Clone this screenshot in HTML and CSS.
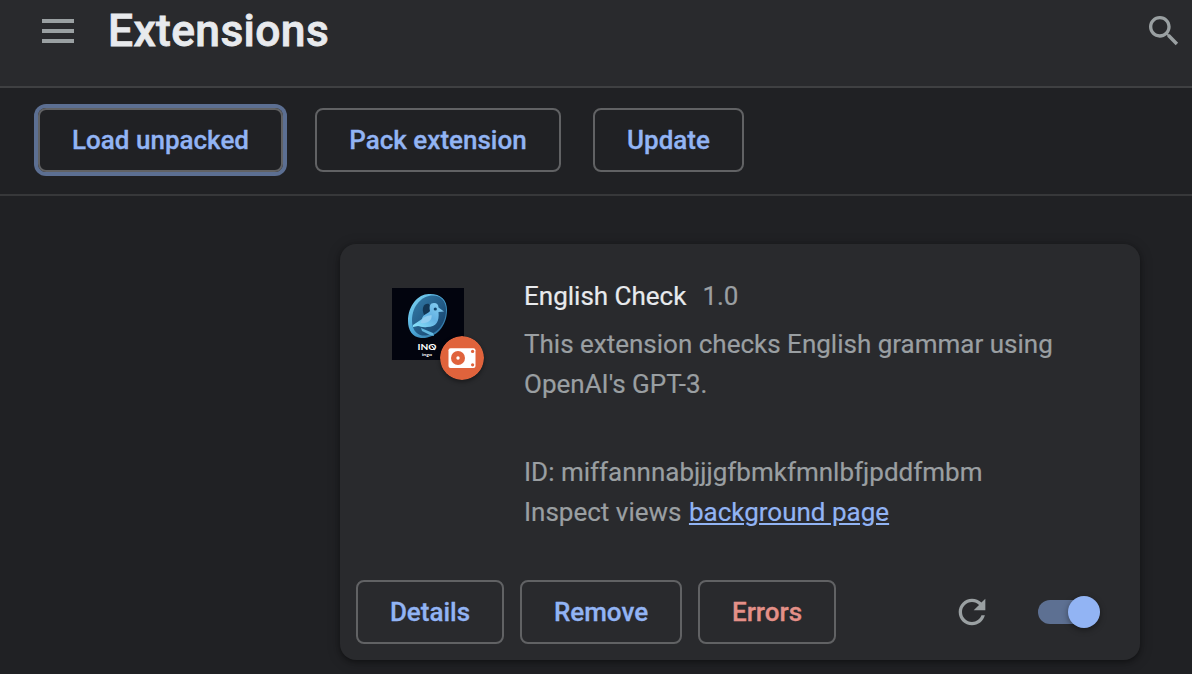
FILE: index.html
```html
<!DOCTYPE html>
<html lang="en">
<head>
<meta charset="utf-8">
<title>Extensions</title>
<link rel="stylesheet" href="styles.css">
</head>
<body>
<header class="toolbar">
  <svg class="menu-icon" viewBox="0 0 32 24"><path d="M0 0h32v4H0zM0 10h32v4H0zM0 20h32v4H0z"/></svg>
  <h1 class="title">Extensions</h1>
  <svg class="icon" viewBox="0 0 24 24"><path d="M15.5 14h-.79l-.28-.27C15.41 12.59 16 11.11 16 9.5 16 5.91 13.09 3 9.5 3S3 5.91 3 9.5 5.91 16 9.5 16c1.61 0 3.09-.59 4.23-1.57l.27.28v.79l5 4.99L20.49 19l-4.99-5zm-6 0C7.01 14 5 11.99 5 9.5S7.01 5 9.5 5 14 7.01 14 9.5 11.99 14 9.5 14z"/></svg>
</header>
<nav class="dev-bar">
  <button class="btn btn-load">Load unpacked</button>
  <button class="btn btn-pack">Pack extension</button>
  <button class="btn btn-update">Update</button>
</nav>
<main class="content">
  <article class="card">
    <div class="card-main">
      <div class="logo">
        <svg class="logo-art" viewBox="0 0 72 72">
          <defs>
            <linearGradient id="rim" x1="0" y1="0" x2="1" y2="1"><stop offset="0" stop-color="#86dcf8"/><stop offset=".5" stop-color="#4ba6d6"/><stop offset="1" stop-color="#245e8b"/></linearGradient>
            <linearGradient id="disc" x1="0" y1="0" x2="1" y2="1"><stop offset="0" stop-color="#347da9"/><stop offset="1" stop-color="#143e68"/></linearGradient>
            <linearGradient id="bird" x1="1" y1="0" x2="0" y2="1"><stop offset="0" stop-color="#8bd3f4"/><stop offset=".5" stop-color="#63b1e3"/><stop offset="1" stop-color="#8be5fb"/></linearGradient>
          </defs>
          <rect width="72" height="72" fill="#02040e"/>
          <path d="M38 6C27 5 16 17 16 33c0 9 4 16 13 17 14 1 26-11 26-28C55 12 49 6 38 6z" fill="url(#rim)"/>
          <path d="M41 7.500C30 7.500 20 18 20 32c0 8 3 14 10 15.500 13 1 24-10.500 24-25.500 0-9-5-14.500-13-14.500z" fill="url(#disc)"/>
          <path d="M37 16c-5-1-8 4-5 11l4 3 4-7z" fill="#123654"/>
          <path d="M21 37l9-6c1-5 6-5 8-8-1-5 0-8 4-8 3 0 4.500 2 4.500 4.500l5.500 4-5.500.5c1 9-2 15-11.500 15-4 1-7-1-9-1l-5 1z" fill="url(#bird)"/>
          <path d="M28.500 35c1-6 6-7 11-8 1 5-4 9-11 8z" fill="#91cdf0"/>
          <circle cx="43.300" cy="21" r="1.600" fill="#12456d"/>
          <path d="M29 40l12 5 1 3-4-1-8-4z" fill="#62b7df"/>
          <text x="25.500" y="62.300" class="logo-name" textLength="19" lengthAdjust="spacingAndGlyphs">INO</text>
          <path d="M39.500 57.500l3.500 4.500" stroke="#fff" stroke-width="1.100"/>
          <text x="30" y="68.200" class="logo-sub" textLength="10" lengthAdjust="spacingAndGlyphs">ingo</text>
        </svg>
        <svg class="badge" viewBox="0 0 44 44">
          <circle cx="22" cy="22" r="22" fill="#e0633c"/>
          <rect x="8.500" y="12.300" width="27" height="19.700" rx="2" fill="#fff"/>
          <circle cx="18" cy="22" r="7" fill="#e0633c"/>
          <circle cx="18" cy="22" r="1.700" fill="#fff"/>
          <circle cx="32.600" cy="15.400" r="1.600" fill="#e0633c"/>
          <circle cx="32.600" cy="28.800" r="1.600" fill="#e0633c"/>
        </svg>
      </div>
      <div class="info">
        <div class="name-row"><span class="name">English Check</span><span>1.0</span></div>
        <p class="description">This extension checks English grammar using OpenAI's GPT-3.</p>
        <div>ID: miffannnabjjjgfbmkfmnlbfjpddfmbm</div>
        <div>Inspect views <a class="link" href="#">background page</a></div>
      </div>
    </div>
    <footer class="actions">
      <button class="btn btn-details">Details</button>
      <button class="btn btn-remove">Remove</button>
      <button class="btn btn-errors">Errors</button>
      <svg class="icon reload" viewBox="0 0 24 24"><path d="M17.65 6.35C16.2 4.9 14.21 4 12 4c-4.420 0-7.990 3.580-7.990 8s3.570 8 7.990 8c3.730 0 6.840-2.550 7.730-6h-2.080c-.82 2.330-3.040 4-5.650 4-3.310 0-6-2.690-6-6s2.690-6 6-6c1.660 0 3.140.69 4.220 1.780L13 11h7V4l-2.350 2.350z"/></svg>
      <div class="toggle"><span class="knob"></span></div>
    </footer>
  </article>
</main>
</body>
</html>
```
FILE: styles.css
```css
* { box-sizing: border-box; }

body {
  margin: 0;
  height: 674px;
  overflow: hidden;
  display: flex;
  flex-direction: column;
  background: #202124;
  color: #9a9fa2;
  font: 400 26px/40px Roboto, sans-serif;
}

.toolbar {
  flex: none;
  height: 88px;
  padding: 0 8px 24px 42px;
  display: flex;
  align-items: center;
  background: #292a2d;
  border-bottom: 2px solid #3f4042;
}

.menu-icon { width: 32px; height: 24px; fill: #9aa0a2; }

.title {
  flex: 1;
  margin: 0 0 0 34px;
  color: #e8eaed;
  font-size: 44.4px;
  font-weight: 500;
  letter-spacing: .35px;
  -webkit-text-stroke: .8px currentColor;
}

.icon { width: 40px; height: 40px; fill: #9aa0a2; }

.dev-bar {
  flex: none;
  height: 108px;
  padding: 20px 38px;
  display: flex;
  gap: 32px;
  border-bottom: 2px solid #37383a;
}

.btn {
  height: 64px;
  padding: 0;
  border: 2px solid #616264;
  border-radius: 8px;
  background: transparent;
  color: #92b4f4;
  font: 500 26px/40px Roboto, sans-serif;
  -webkit-text-stroke: .3px currentColor;
}

.btn-load { width: 245px; box-shadow: 0 0 0 4px #5c6f92; }
.btn-pack { width: 246px; }
.btn-update { width: 151px; }
.btn-details { width: 148px; }
.btn-remove { width: 162px; }
.btn-errors { width: 138px; color: #e49088; }

.content { padding: 48px 52px 0 340px; }

.card {
  height: 416px;
  padding: 32px 16px 16px;
  display: flex;
  flex-direction: column;
  justify-content: space-between;
  border-radius: 16px;
  background: #292a2d;
  box-shadow: 0 2px 4px rgba(0, 0, 0, .3), 0 2px 12px 2px rgba(0, 0, 0, .2);
}

.card-main { display: flex; gap: 60px; padding-left: 36px; }

.logo { position: relative; flex: none; width: 72px; height: 72px; margin-top: 12px; }
.logo-art { display: block; width: 72px; height: 72px; }
.logo-name { font: 700 8px Lato, sans-serif; fill: #fff; }
.logo-sub { font: 700 4.2px Lato, sans-serif; fill: #fff; }

.badge {
  position: absolute;
  left: 48px;
  top: 48px;
  width: 44px;
  height: 44px;
  border-radius: 50%;
  box-shadow: 0 2px 4px rgba(0, 0, 0, .4);
}

.info { width: 560px; -webkit-text-stroke: .2px currentColor; }
.name-row { display: flex; gap: 16px; }
.name { color: #e8eaed; }
.description { margin: 8px 0 48px; }
.link { margin-left: 1px; color: #92b4f4; }

.actions { display: flex; align-items: center; gap: 16px; }
.reload { margin-left: auto; }

.toggle {
  position: relative;
  width: 56px;
  height: 24px;
  margin: 0 30px 0 30px;
  border-radius: 12px;
  background: #5d7092;
}

.knob {
  position: absolute;
  left: 30px;
  top: -4px;
  width: 32px;
  height: 32px;
  border-radius: 50%;
  background: #92b4f4;
  box-shadow: 0 2px 6px rgba(0, 0, 0, .4);
}
```
